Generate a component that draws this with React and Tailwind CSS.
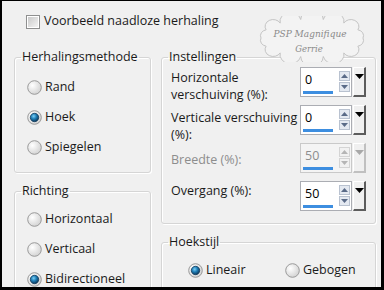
import React, { useId } from "react";

function Radio({ checked }) {
    const id = useId();
    return (
        <svg width="15" height="15" viewBox="0 0 15 15" className="shrink-0">
            <defs>
                <radialGradient id={id + "o"} cx="35%" cy="35%" r="75%">
                    <stop offset="0%" stopColor="#ffffff" />
                    <stop offset="100%" stopColor="#cfcfcf" />
                </radialGradient>
                <radialGradient id={id + "i"} cx="40%" cy="35%" r="70%">
                    <stop offset="0%" stopColor="#7fd0f5" />
                    <stop offset="45%" stopColor="#1f7fb8" />
                    <stop offset="100%" stopColor="#0b2f4e" />
                </radialGradient>
            </defs>
            <circle cx="7.5" cy="7.5" r="6.8" fill={`url(#${id}o)`} stroke="#9a9a9a" strokeWidth="1" />
            {checked && <circle cx="7.5" cy="7.5" r="4.2" fill={`url(#${id}i)`} stroke="#123c5e" strokeWidth="0.8" />}
        </svg>
    );
}

function RadioRow({ label, checked }) {
    return (
        <div className="h-[30px] flex items-center gap-[3px]">
            <Radio checked={checked} />
            <span>{label}</span>
        </div>
    );
}

function Spin({ value, disabled }) {
    const arrow = disabled ? "#b5b5b5" : "#5a6b88";
    return (
        <div className="flex h-[30px] shrink-0">
            <div className={`w-[52px] h-[30px] border flex ${disabled ? "border-[#c9c9c9] bg-[#f4f4f4]" : "border-[#abadb3] bg-white"}`}>
                <div className="flex-1 flex flex-col">
                    <div className={`flex-1 flex items-center pl-[4px] ${disabled ? "text-[#8d8d8d]" : "text-black"}`}>{value}</div>
                    <div className="h-[3px] w-[30px] ml-[2px] mb-[2px] bg-[#3d8ee0]" />
                </div>
                <div className="w-[12px] flex flex-col gap-[1px] pt-[3px] pr-[1px]">
                    <div className={`h-[10px] border flex items-center justify-center ${disabled ? "border-[#d4d4d4] bg-[#f1f1f1]" : "border-[#b9c2d0] bg-[#e4e9f1]"}`}>
                        <svg width="7" height="4" viewBox="0 0 7 4"><path d="M0 4 L3.5 0 L7 4 Z" fill={arrow} /></svg>
                    </div>
                    <div className={`h-[10px] border flex items-center justify-center ${disabled ? "border-[#d4d4d4] bg-[#f1f1f1]" : "border-[#b9c2d0] bg-[#e4e9f1]"}`}>
                        <svg width="7" height="4" viewBox="0 0 7 4"><path d="M0 0 L7 0 L3.5 4 Z" fill={arrow} /></svg>
                    </div>
                </div>
            </div>
            <div className={`w-[13px] h-[30px] ml-[1px] border-t border-l border-white border-r-2 border-b-2 flex justify-center pt-[6px] bg-[#f0f0f0] ${disabled ? "border-r-[#c0c0c0] border-b-[#c0c0c0]" : "border-r-[#5c5c5c] border-b-[#5c5c5c]"}`}>
                <svg width="9" height="5" viewBox="0 0 9 5"><path d="M0 0 L9 0 L4.5 5 Z" fill={disabled ? "#a8a8a8" : "#000"} /></svg>
            </div>
        </div>
    );
}

function Group({ title, className, children }) {
    return (
        <fieldset className="p-0 m-0 min-w-0 border border-[#d5d5d5] rounded-[3px] shadow-[inset_1px_1px_0_#ffffff,1px_1px_0_#ffffff]">
            <legend className="float-none w-auto ml-[6px] mr-auto px-[1px] leading-[16px]">{title}</legend>
            <div className={className}>{children}</div>
        </fieldset>
    );
}

function Watermark() {
    const cx = 54, cy = 22, rx = 51, ry = 19, n = 14;
    let d = "";
    for (let i = 0; i <= n; i++) {
        const a = (i / n) * Math.PI * 2;
        const x = cx + rx * Math.cos(a);
        const y = cy + ry * Math.sin(a);
        if (i === 0) d += `M${x.toFixed(1)} ${y.toFixed(1)}`;
        else d += ` A7 6 0 0 1 ${x.toFixed(1)} ${y.toFixed(1)}`;
    }
    return (
        <svg width="110" height="46" viewBox="0 0 110 46" className="absolute left-[256px] top-[15px]">
            <path d={d} fill="#f3f3f3" stroke="#c4c4c4" strokeWidth="1" />
            <text x="52" y="21" textAnchor="middle" fontFamily="'DejaVu Serif', serif" fontStyle="italic" fontSize="9" fill="#8a8a8a">PSP Magnifique</text>
            <text x="51" y="36" textAnchor="middle" fontFamily="'DejaVu Serif', serif" fontStyle="italic" fontSize="8.5" fill="#8a8a8a">Gerrie</text>
        </svg>
    );
}

export default function App() {
    return (
        <div className="relative w-[384px] h-[290px] overflow-hidden bg-[#f0f0f0] border-t border-l-2 border-r-[3px] border-b-[3px] border-black text-[12.5px] text-[#1a1a1a] font-['Open_Sans',sans-serif]">
            {/* checkbox */}
            <div className="flex items-center gap-[4px] pt-[13px] pl-[24px] h-[28px]">
                <div className="w-[14px] h-[14px] border border-[#8e8f8f] bg-white p-[1px]">
                    <div className="w-full h-full bg-gradient-to-br from-[#c9c9c9] to-[#f4f4f4]" />
                </div>
                <span>Voorbeeld naadloze herhaling</span>
            </div>

            <Watermark />

            <div className="flex gap-[10px] pl-[12px] mt-[20px]">
                {/* left column */}
                <div className="w-[137px] flex flex-col gap-[10px]">
                    <Group title="Herhalingsmethode" className="pl-[12px] pt-[7px] pb-[10px]">
                        <RadioRow label="Rand" />
                        <RadioRow label="Hoek" checked />
                        <RadioRow label="Spiegelen" />
                    </Group>
                    <Group title="Richting" className="pl-[12px] pt-[5px] h-[120px]">
                        <RadioRow label="Horizontaal" />
                        <RadioRow label="Verticaal" />
                        <RadioRow label="Bidirectioneel" checked />
                    </Group>
                </div>

                {/* right column */}
                <div className="w-[215px] flex flex-col gap-[10px]">
                    <Group title="Instellingen" className="pl-[9px] pr-[9px] pt-[2px] pb-[12px]">
                        <div className="flex flex-col gap-[8px] leading-[17px]">
                            <div className="h-[30px] flex justify-between items-start">
                                <div className="pt-[2px]">Horizontale<br />verschuiving (%):</div>
                                <Spin value="0" />
                            </div>
                            <div className="h-[30px] flex justify-between items-start">
                                <div className="pt-[4px]">Verticale verschuiving<br />(%):</div>
                                <Spin value="0" />
                            </div>
                            <div className="h-[30px] flex justify-between items-center">
                                <div className="pt-[2px] text-[#8d8d8d]">Breedte (%):</div>
                                <Spin value="50" disabled />
                            </div>
                            <div className="h-[30px] flex justify-between items-start">
                                <div className="pt-[1px]">Overgang (%):</div>
                                <Spin value="50" />
                            </div>
                        </div>
                    </Group>
                    <Group title="Hoekstijl" className="pl-[26px] pt-[5px] h-[60px]">
                        <div className="flex">
                            <div className="w-[97px]"><RadioRow label="Lineair" checked /></div>
                            <RadioRow label="Gebogen" />
                        </div>
                    </Group>
                </div>
            </div>
        </div>
    );
}
